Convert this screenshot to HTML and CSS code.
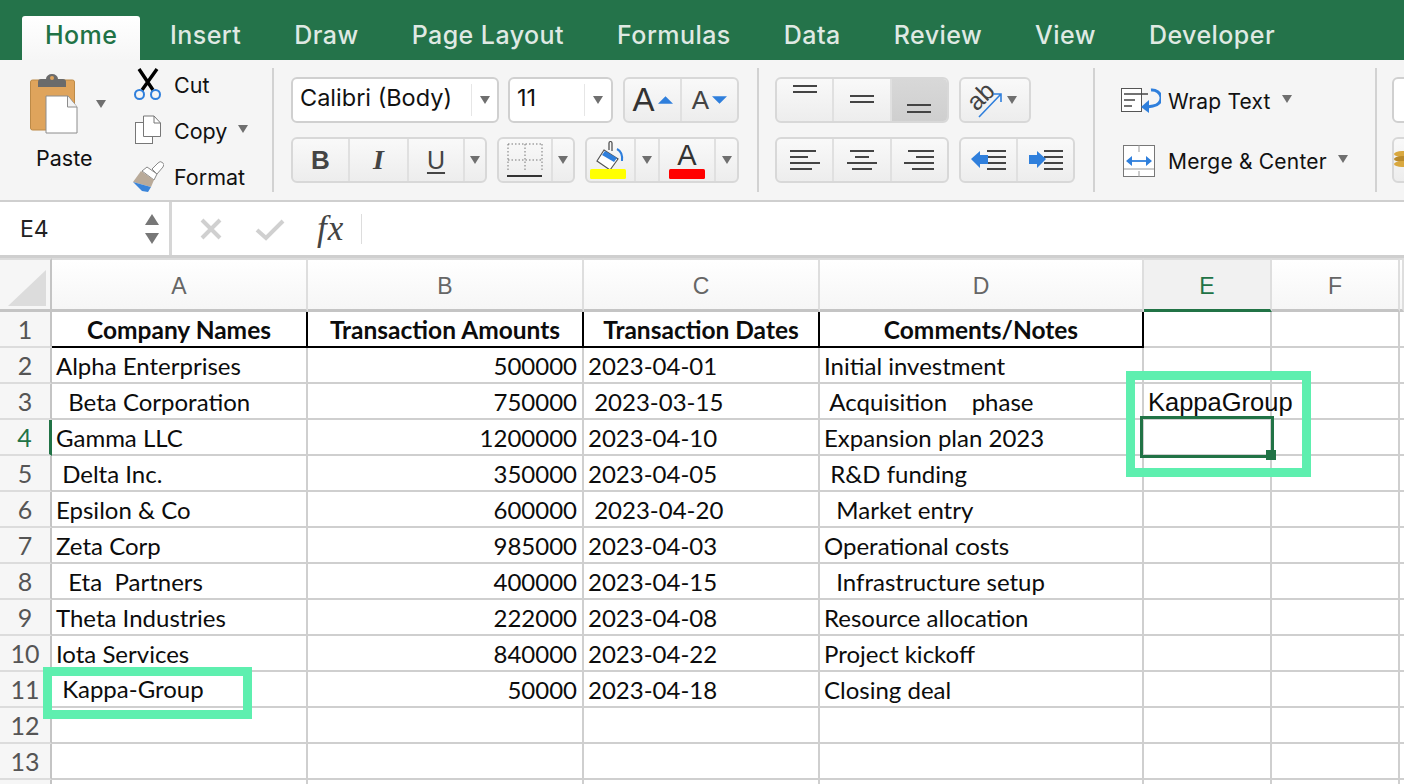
FILE: index.html
```html
<!DOCTYPE html>
<html lang="en">
<head>
<meta charset="utf-8">
<title>Excel</title>
<link rel="stylesheet" href="styles.css">
</head>
<body>
<div class="app">
  <nav class="tabs">
    <div class="tab active">Home</div>
    <div class="tab">Insert</div>
    <div class="tab">Draw</div>
    <div class="tab">Page Layout</div>
    <div class="tab">Formulas</div>
    <div class="tab">Data</div>
    <div class="tab">Review</div>
    <div class="tab">View</div>
    <div class="tab">Developer</div>
  </nav>

  <section class="ribbon">
    <div class="group clip">
      <div class="paste">
        <div class="paste-top">
          <svg class="ico-paste" viewBox="0 0 48 62" width="48" height="62">
            <rect x="0.5" y="7" width="44" height="50" rx="2" fill="#dfa45c" stroke="#bd8a47"/>
            <path d="M8 14 V9 a3 3 0 0 1 3-3 h5 a6 5 0 0 1 12 0 h5 a3 3 0 0 1 3 3 V14 Z" fill="#6b6b6b"/>
            <circle cx="22" cy="5" r="2" fill="#dfa45c"/>
            <path d="M16 23 H38 L47 34 V60 H16 Z" fill="#fff" stroke="#8c8c8c" stroke-width="1"/>
            <path d="M37.500 23 V34 H47" fill="#f3f3f3" stroke="#8c8c8c" stroke-width="1"/>
          </svg>
          <span class="caret paste-caret"></span>
        </div>
        <div class="paste-label">Paste</div>
      </div>
      <div class="clip-list">
        <div class="clip-item">
          <svg class="clip-ico" viewBox="0 0 32 36" width="32" height="36">
            <path d="M7 2 L21 23 M25 2 L10 23" stroke="#000" stroke-width="3.400" fill="none"/>
            <circle cx="7.500" cy="27.500" r="4.500" fill="none" stroke="#2f7fdc" stroke-width="2"/>
            <circle cx="23.500" cy="27.500" r="4.500" fill="none" stroke="#2f7fdc" stroke-width="2"/>
          </svg>
          <span>Cut</span>
        </div>
        <div class="clip-item">
          <svg class="clip-ico" viewBox="0 0 32 36" width="32" height="36">
            <rect x="3.500" y="9.500" width="17" height="21" fill="#fff" stroke="#777"/>
            <path d="M11.500 3 H22 L28.500 10 V23.500 H11.500 Z" fill="#fff" stroke="#777"/>
            <path d="M22 3 V10 H28.500" fill="none" stroke="#777"/>
          </svg>
          <span>Copy</span><span class="caret copy-caret"></span>
        </div>
        <div class="clip-item">
          <svg class="clip-ico" viewBox="0 0 32 36" width="32" height="36">
            <path d="M20 10 L26 4 a3 3 0 0 1 5 4 L25 15 Z" fill="#fff" stroke="#888"/>
            <path d="M15 8 L25 15 L22 21 L10 12 Z" fill="#fff" stroke="#888"/>
            <path d="M9 12 L22 21 L19 28 L1 23 Z" fill="#b9aa99"/>
            <path d="M1 23 L19 28 L16 33 L10 32 Z" fill="#3a84d9"/>
          </svg>
          <span>Format</span>
        </div>
      </div>
    </div>
    <div class="divider"></div>

    <div class="group font">
      <div class="row">
        <div class="field w-font"><span class="field-text">Calibri (Body)</span><span class="field-arrow"><span class="caret"></span></span></div>
        <div class="field w-size"><span class="field-text">11</span><span class="field-arrow wide"><span class="caret"></span></span></div>
        <div class="btns w-ab">
          <div class="btn grow">
            <span class="big-a">A</span>
            <svg viewBox="0 0 16 9" width="15" height="9"><path d="M8 0 L16 8 H0 Z" fill="#2f7fdc"/></svg>
          </div>
          <div class="btn grow">
            <span class="small-a">A</span>
            <svg viewBox="0 0 16 9" width="15" height="9"><path d="M0 0 H16 L8 8 Z" fill="#2f7fdc"/></svg>
          </div>
        </div>
      </div>
      <div class="row">
        <div class="btns w-biu">
          <div class="btn w-b"><b class="glyph-b">B</b></div>
          <div class="btn w-i"><span class="glyph-i">I</span></div>
          <div class="btn w-u"><span class="glyph-u">U</span></div>
          <div class="btn fill-rest"><span class="caret"></span></div>
        </div>
        <div class="btns w-border">
          <div class="btn w-bd">
            <svg viewBox="0 0 36 36" width="36" height="36">
              <path d="M1 2 H35 M1 18 H35 M1 2 V30 M18 2 V30 M35 2 V30" stroke="#777" stroke-width="1" stroke-dasharray="1.500 2" fill="none"/>
              <path d="M0 34 H35" stroke="#333" stroke-width="2"/>
            </svg>
          </div>
          <div class="btn fill-rest"><span class="caret"></span></div>
        </div>
        <div class="btns w-color">
          <div class="btn w-bucket">
            <svg viewBox="0 0 36 40" width="36" height="40">
              <path d="M14 10 L28 19 L20 30 L7 21 Z" fill="#fff" stroke="#555" stroke-width="1.200"/>
              <path d="M15 11 L27 18 L24 22 L12 15 Z" fill="#2f7fdc"/>
              <path d="M19 10 V3 a1.500 1.500 0 0 1 3 0 V11" fill="none" stroke="#444" stroke-width="1.200"/>
              <path d="M27 9 Q33 12 32 21" fill="none" stroke="#2f7fdc" stroke-width="2"/>
              <rect x="0" y="29" width="36" height="10" rx="1.500" fill="#ffff00"/>
            </svg>
          </div>
          <div class="btn w-caret"><span class="caret"></span></div>
          <div class="btn w-fill">
            <svg viewBox="0 0 36 40" width="36" height="40">
              <rect x="0" y="29" width="36" height="10" rx="1.500" fill="#ff0000"/>
            </svg>
            <span class="color-a">A</span>
          </div>
          <div class="btn fill-rest"><span class="caret"></span></div>
        </div>
      </div>
    </div>
    <div class="divider"></div>

    <div class="group align">
      <div class="row">
        <div class="btns w-three">
          <div class="btn third">
            <svg viewBox="0 0 26 36" width="26" height="36"><path d="M1 4 H25 M1 10 H25" stroke="#444" stroke-width="2"/></svg>
          </div>
          <div class="btn third">
            <svg viewBox="0 0 26 36" width="26" height="36"><path d="M1 14 H25 M1 20 H25" stroke="#444" stroke-width="2"/></svg>
          </div>
          <div class="btn third pressed">
            <svg viewBox="0 0 26 36" width="26" height="36"><path d="M1 23 H25 M1 30 H25" stroke="#444" stroke-width="2"/></svg>
          </div>
        </div>
        <div class="btn solo w-orient">
          <svg class="orient-ico" viewBox="0 0 36 40" width="36" height="40">
            <text class="ab" x="1" y="24" transform="rotate(-45 14 20)">ab</text>
            <path d="M10 37 L32 14 M24 14 H32 V22" stroke="#2f7fdc" stroke-width="1.600" fill="none"/>
          </svg>
          <span class="caret"></span>
        </div>
      </div>
      <div class="row">
        <div class="btns w-three">
          <div class="btn third">
            <svg viewBox="0 0 32 26" width="32" height="26"><path d="M1 4 H27 M1 10 H19 M1 16 H31 M1 22 H23" stroke="#444" stroke-width="2"/></svg>
          </div>
          <div class="btn third">
            <svg viewBox="0 0 32 26" width="32" height="26"><path d="M4 4 H28 M9 10 H23 M1 16 H31 M6 22 H26" stroke="#444" stroke-width="2"/></svg>
          </div>
          <div class="btn third">
            <svg viewBox="0 0 32 26" width="32" height="26"><path d="M5 4 H31 M13 10 H31 M1 16 H31 M9 22 H31" stroke="#444" stroke-width="2"/></svg>
          </div>
        </div>
        <div class="btns w-indent">
          <div class="btn half">
            <svg viewBox="0 0 36 24" width="36" height="24">
              <path d="M16 3 H35 M16 9 H35 M16 15 H35 M16 21 H35" stroke="#444" stroke-width="2"/>
              <path d="M0 11 L9 3 V7 H17 V16 H9 V20 Z" fill="#2f7fdc"/>
            </svg>
          </div>
          <div class="btn half">
            <svg viewBox="0 0 36 24" width="36" height="24">
              <path d="M16 3 H35 M16 9 H35 M16 15 H35 M16 21 H35" stroke="#444" stroke-width="2"/>
              <path d="M18 11 L9 3 V7 H1 V16 H9 V20 Z" fill="#2f7fdc"/>
            </svg>
          </div>
        </div>
      </div>
    </div>
    <div class="divider"></div>

    <div class="group wrap">
      <div class="wrap-item">
        <svg class="wrap-ico" viewBox="0 0 40 26" width="40" height="26">
          <rect x="0.500" y="0.500" width="20" height="23" fill="#fff" stroke="#555"/>
          <path d="M3 6 H27 M3 12 H14 M3 18 H11" stroke="#444" stroke-width="1.300"/>
          <path d="M30 2 a9 8 0 0 1 2 16 L26 19" fill="none" stroke="#2f7fdc" stroke-width="3"/>
          <path d="M28 12 V25 L20 19 Z" fill="#2f7fdc"/>
        </svg>
        <span>Wrap Text</span><span class="caret wrap-caret"></span>
      </div>
      <div class="wrap-item merge">
        <svg class="wrap-ico" viewBox="0 0 40 34" width="40" height="34">
          <rect x="2.500" y="1.500" width="31" height="31" fill="#fff" stroke="#777"/>
          <path d="M18 1 V8 M18 27 V33 M3 25 H33" stroke="#999"/>
          <path d="M7 17 H29" stroke="#2f7fdc" stroke-width="1.800"/>
          <path d="M5 17 L11 12 V22 Z M31 17 L25 12 V22 Z" fill="#2f7fdc"/>
        </svg>
        <span>Merge &amp; Center</span><span class="caret wrap-caret"></span>
      </div>
    </div>
    <div class="divider"></div>

    <div class="group tail">
      <div class="field tail-field"></div>
      <div class="btn solo tail-btn">
        <svg viewBox="0 0 14 20" width="14" height="20"><ellipse cx="8" cy="4" rx="8" ry="3" fill="#d9a83f"/><ellipse cx="8" cy="9" rx="8" ry="3" fill="#b98a2c"/><ellipse cx="8" cy="14" rx="8" ry="3" fill="#d9a83f"/></svg>
      </div>
    </div>
  </section>

  <section class="formula">
    <div class="namebox">
      <span>E4</span>
      <span class="spin"><i class="up"></i><i class="down"></i></span>
    </div>
    <div class="fx-tools">
      <svg viewBox="0 0 24 24" width="24" height="24"><path d="M3 3 L21 21 M21 3 L3 21" stroke="#d0d0d0" stroke-width="4"/></svg>
      <svg viewBox="0 0 30 24" width="30" height="24"><path d="M2 13 L11 21 L28 4" stroke="#d0d0d0" stroke-width="4" fill="none"/></svg>
      <span class="fx">fx</span>
      <span class="fx-sep"></span>
    </div>
  </section>

  <section class="sheet">
    <div class="grid">
      <div class="hd corner"><svg viewBox="0 0 50 50" width="50" height="50"><path d="M8 46 L46 10 V46 Z" fill="#dcdcdc"/></svg></div>
      <div class="hd col">A</div><div class="hd col">B</div><div class="hd col">C</div><div class="hd col">D</div><div class="hd col cur">E</div><div class="hd col">F</div><div class="hd col"></div>

      <div class="num">1</div><div class="c top">Company Names</div><div class="c top">Transaction Amounts</div><div class="c top">Transaction Dates</div><div class="c top">Comments/Notes</div><div class="c"></div><div class="c"></div><div class="c"></div>
      <div class="num">2</div><div class="c">Alpha Enterprises</div><div class="c r">500000</div><div class="c">2023-04-01</div><div class="c">Initial investment</div><div class="c"></div><div class="c"></div><div class="c"></div>
      <div class="num">3</div><div class="c">  Beta Corporation</div><div class="c r">750000</div><div class="c"> 2023-03-15</div><div class="c"> Acquisition    phase</div><div class="c arial">KappaGroup</div><div class="c"></div><div class="c"></div>
      <div class="num now">4</div><div class="c">Gamma LLC</div><div class="c r">1200000</div><div class="c">2023-04-10</div><div class="c">Expansion plan 2023</div><div class="c"></div><div class="c"></div><div class="c"></div>
      <div class="num">5</div><div class="c"> Delta Inc.</div><div class="c r">350000</div><div class="c">2023-04-05</div><div class="c"> R&amp;D funding</div><div class="c"></div><div class="c"></div><div class="c"></div>
      <div class="num">6</div><div class="c">Epsilon &amp; Co</div><div class="c r">600000</div><div class="c"> 2023-04-20</div><div class="c">  Market entry</div><div class="c"></div><div class="c"></div><div class="c"></div>
      <div class="num">7</div><div class="c">Zeta Corp</div><div class="c r">985000</div><div class="c">2023-04-03</div><div class="c">Operational costs</div><div class="c"></div><div class="c"></div><div class="c"></div>
      <div class="num">8</div><div class="c">  Eta  Partners</div><div class="c r">400000</div><div class="c">2023-04-15</div><div class="c">  Infrastructure setup</div><div class="c"></div><div class="c"></div><div class="c"></div>
      <div class="num">9</div><div class="c">Theta Industries</div><div class="c r">222000</div><div class="c">2023-04-08</div><div class="c">Resource allocation</div><div class="c"></div><div class="c"></div><div class="c"></div>
      <div class="num">10</div><div class="c">Iota Services</div><div class="c r">840000</div><div class="c">2023-04-22</div><div class="c">Project kickoff</div><div class="c"></div><div class="c"></div><div class="c"></div>
      <div class="num">11</div><div class="c"></div><div class="c r">50000</div><div class="c">2023-04-18</div><div class="c">Closing deal</div><div class="c"></div><div class="c"></div><div class="c"></div>
      <div class="num">12</div><div class="c"></div><div class="c"></div><div class="c"></div><div class="c"></div><div class="c"></div><div class="c"></div><div class="c"></div>
      <div class="num">13</div><div class="c"></div><div class="c"></div><div class="c"></div><div class="c"></div><div class="c"></div><div class="c"></div><div class="c"></div>
      <div class="num"></div><div class="c"></div><div class="c"></div><div class="c"></div><div class="c"></div><div class="c"></div><div class="c"></div><div class="c"></div>
    </div>
    <div class="mark mark-e"></div>
    <div class="selection"><span class="handle"></span></div>
    <div class="mark mark-a"><span class="mark-text"> Kappa-Group</span></div>
  </section>
</div>
</body>
</html>
```
FILE: styles.css
```css
* { box-sizing: border-box; }
html, body { margin: 0; padding: 0; }
body { width: 1404px; height: 784px; overflow: hidden; background: #fff; font-family: "Inter", "Liberation Sans", sans-serif; color: #111; }
.app { width: 1404px; height: 784px; overflow: hidden; display: flex; flex-direction: column; }

/* tabs */
.tabs { height: 60px; flex: none; background: #24734a; display: flex; align-items: flex-end; padding-left: 22px; }
.tab { height: 44px; padding: 0 26.500px; font-size: 25px; font-weight: 500; letter-spacing: .45px; line-height: 38px; color: #dfe9e3; white-space: nowrap; }
.tab.active { width: 118px; padding: 0 0 0 23px; margin-right: 3.500px; background: linear-gradient(#fff, #f6f6f6); color: #217346; border-radius: 3px 3px 0 0; }

/* ribbon */
.ribbon { height: 142px; flex: none; background: #f5f5f5; display: flex; border-bottom: 2px solid #cfcfcf; font-size: 21.500px; color: #111; overflow: hidden; }
.divider { width: 2px; height: 124px; margin-top: 8px; background: #d2d2d2; flex: none; }
.group { flex: none; }
.caret { display: inline-block; width: 0; height: 0; border-left: 5.500px solid transparent; border-right: 5.500px solid transparent; border-top: 8px solid #6f6f6f; flex: none; }

.clip { width: 272px; display: flex; padding-left: 30px; }
.paste { width: 102px; }
.paste-top { display: flex; align-items: center; height: 62px; margin-top: 13px; }
.paste-caret { margin-left: 18px; }
.ico-paste { flex: none; }
.paste-label { margin: 8px 0 0 6px; line-height: 30px; }
.clip-list { display: flex; flex-direction: column; padding-top: 2px; }
.clip-item { height: 46px; display: flex; align-items: center; }
.clip-ico { flex: none; margin-right: 10px; }
.copy-caret { margin-left: 11px; margin-bottom: 4px; }

.font { width: 483px; padding: 17px 0 0 17px; display: flex; flex-direction: column; gap: 14px; }
.align { width: 334px; padding: 17px 0 0 16px; display: flex; flex-direction: column; gap: 14px; }
.row { display: flex; gap: 10px; height: 46px; }
.field { height: 46px; display: flex; align-items: center; background: #fff; border: 2px solid #d0d0d0; border-radius: 6px; font-size: 23.500px; }
.field-text { flex: 1; padding: 0 0 5px 7px; white-space: nowrap; }
.field-arrow { width: 26px; height: 32px; display: flex; align-items: center; justify-content: center; border-left: 1px solid #e6e6e6; }
.field-arrow.wide { width: 27px; }
.w-font { width: 208px; margin-right: -1px; }
.w-size { width: 105px; }
.btns { height: 46px; display: flex; border: 2px solid #d8d8d8; border-radius: 6px; background: linear-gradient(#f9f9f9, #ededed); overflow: hidden; }
.btn { height: 100%; display: flex; align-items: center; justify-content: center; border-right: 2px solid #e0e0e0; position: relative; }
.btn:last-child { border-right: 0; }
.grow { flex: 1; gap: 3px; }
.w-ab { width: 116px; }
.big-a { font-family: "Liberation Sans", sans-serif; font-size: 33px; color: #333; }
.small-a { font-family: "Liberation Sans", sans-serif; font-size: 26px; color: #444; }
.w-biu { width: 196px; }
.w-b { width: 57px; }
.w-i { width: 59px; }
.w-u { width: 56px; }
.fill-rest { flex: 1; }
.glyph-b { font-family: "Liberation Sans", sans-serif; font-size: 26px; color: #444; }
.glyph-i { font-family: "Liberation Serif", serif; font-style: italic; font-weight: 700; font-size: 28px; color: #444; }
.glyph-u { font-family: "Liberation Sans", sans-serif; font-size: 25px; color: #444; text-decoration: underline; text-underline-offset: 3px; }
.w-border { width: 78px; }
.w-bd { width: 54px; }
.w-color { width: 154px; }
.w-bucket { width: 49px; justify-content: flex-start; padding-left: 3px; }
.w-fill { width: 56px; }
.w-caret { width: 24px; }
.color-a { position: absolute; left: 0; right: 0; top: -2px; text-align: center; font-family: "Liberation Sans", sans-serif; font-size: 29px; line-height: 36px; color: #333; }

.w-three { width: 174px; }
.third { flex: 1; }
.pressed { background: linear-gradient(#d8d8d8, #cfcfcf); }
.solo { border: 2px solid #d8d8d8; border-radius: 6px; background: linear-gradient(#f9f9f9, #ededed); }
.btn.solo { border-right: 2px solid #d8d8d8; }
.w-orient { width: 72px; gap: 2px; padding-right: 4px; }
.orient-ico { overflow: visible; }
.ab { font-family: "Liberation Sans", sans-serif; font-size: 25px; fill: #444; }
.w-indent { width: 116px; }
.half { flex: 1; }

.wrap { width: 280px; padding: 0 0 0 26px; }
.wrap-item { display: flex; align-items: center; height: 60px; margin-top: 11px; font-size: 21px; letter-spacing: .2px; white-space: nowrap; }
.wrap-item.merge { margin-top: 0; }
.wrap-ico { flex: none; margin-right: 7px; }
.wrap-caret { margin-left: 11px; margin-bottom: 4px; }
.tail { flex: 1; padding: 17px 0 0 15px; display: flex; flex-direction: column; gap: 14px; }
.tail-field { width: 40px; flex: none; }
.tail-btn { width: 40px; height: 46px; flex: none; justify-content: flex-start; }

/* formula bar */
.formula { height: 56px; flex: none; background: #fff; display: flex; border-bottom: 3px solid #cfcfcf; }
.namebox { width: 172px; display: flex; align-items: center; justify-content: space-between; padding: 0 10px 0 20px; border-right: 3px solid #d6d6d6; font-size: 23px; color: #222; }
.spin { display: flex; flex-direction: column; gap: 8px; }
.spin i { display: block; width: 0; height: 0; border-left: 7px solid transparent; border-right: 7px solid transparent; }
.spin .up { border-bottom: 11px solid #777; }
.spin .down { border-top: 11px solid #777; }
.fx-tools { display: flex; align-items: center; padding-left: 27px; }
.fx-tools svg + svg { margin-left: 32px; }
.fx { margin-left: 32px; font-family: "Liberation Serif", serif; font-style: italic; font-size: 35px; color: #444; letter-spacing: 1px; }
.fx-sep { width: 1px; height: 30px; margin-left: 17px; background: #ddd; }

/* sheet */
.sheet { flex: 1; position: relative; overflow: hidden; }
.grid { display: grid; grid-template-columns: 52px 256px 276px 236px 324px 128px 128px 4px; grid-template-rows: 54px repeat(14, 36px); }
.hd { background: linear-gradient(#fff, #f6f6f6); border-right: 2px solid #dedede; border-bottom: 3px solid #c4c4c4; border-top: 2px solid #dcdcdc; display: flex; align-items: center; justify-content: center; padding-top: 3px; font-family: "Liberation Sans", sans-serif; font-size: 23px; color: #666; }
.corner { background: #f6f6f6; border-right: 2px solid #c4c4c4; padding-top: 0; }
.cur { background: #f1f1f1; color: #217346; border-bottom-color: #217346; }
.num { background: #f6f6f6; border-right: 2px solid #c4c4c4; border-bottom: 2px solid #dcdcdc; display: flex; align-items: center; justify-content: center; font-family: "Lato", sans-serif; font-size: 25px; color: #555; position: relative; }
.num.now { color: #217346; border-right: 3px solid #217346; }
.c { border-right: 2px solid #cfcfcf; border-bottom: 2px solid #cfcfcf; padding: 0 4px; font-family: "Lato", sans-serif; font-size: 24px; line-height: 35px; color: #0c0c0c; white-space: pre; }
.c.r { text-align: right; padding-right: 5px; }
.c.top { border-right-color: #000; border-bottom-color: #000; font-weight: 700; font-size: 24.500px; text-align: center; }
.c.arial { font-family: "Liberation Sans", sans-serif; font-size: 25.500px; line-height: 36px; }

.mark { position: absolute; border: 9.500px solid #5eefaf; }
.mark-e { left: 1126px; top: 113px; width: 185px; height: 106px; }
.mark-a { left: 43px; top: 409px; width: 209px; height: 52px; }
.mark-text { display: block; background: #fff; height: 30px; font-family: "Lato", sans-serif; font-size: 24px; line-height: 26px; padding-left: 4px; white-space: pre; color: #0c0c0c; }
.selection { position: absolute; left: 1140px; top: 158px; width: 134px; height: 42px; border: 3px solid #217346; }
.handle { position: absolute; right: -5px; bottom: -5px; width: 10px; height: 10px; background: #217346; }
```
